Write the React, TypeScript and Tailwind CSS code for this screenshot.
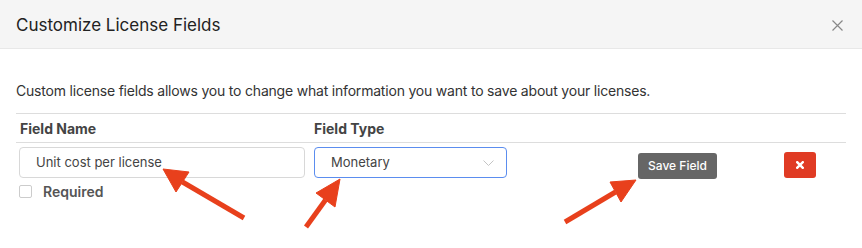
import React from "react";

function Arrow({ tail, tip, left, right }: { tail: [number, number]; tip: [number, number]; left: [number, number]; right: [number, number] }) {
  const mx = (left[0] + right[0]) / 2;
  const my = (left[1] + right[1]) / 2;
  return (
    <g fill="#e8401c" stroke="#e8401c">
      <line x1={tail[0]} y1={tail[1]} x2={mx} y2={my} strokeWidth={5} />
      <polygon points={`${tip[0]},${tip[1]} ${left[0]},${left[1]} ${right[0]},${right[1]}`} strokeWidth={1} strokeLinejoin="round" />
    </g>
  );
}

export default function App() {
  return (
    <div className="relative h-[248px] w-[862px] overflow-hidden bg-white font-['Inter',sans-serif] text-[#333]">
      <header className="flex h-[49px] items-center justify-between border-b border-[#e8e8e8] bg-[#f5f5f5] pt-[3px] pl-4 pr-[19px]">
        <h1 className="text-[17px] font-normal text-[#222]">Customize License Fields</h1>
        <button className="text-[#888]" aria-label="Close">
          <svg width="11" height="11" viewBox="0 0 11 11" stroke="currentColor" strokeWidth="1.2">
            <path d="M0.5 0.5L10.5 10.5M10.5 0.5L0.5 10.5" />
          </svg>
        </button>
      </header>

      <main className="px-4">
        <p className="pt-[32px] pb-[12px] text-[14px] leading-5 tracking-[-0.2px] text-[#333]">
          Custom license fields allows you to change what information you want to save about your licenses.
        </p>

        <div className="grid grid-cols-[294px_324px_146px_1fr] border-t border-[#ddd]">
          <div className="flex h-[29px] items-center border-b border-[#ddd] pl-1 text-[14px] font-bold text-[#444]">Field Name</div>
          <div className="flex h-[29px] items-center border-b border-[#ddd] pl-1 text-[14px] font-bold text-[#444]">Field Type</div>
          <div className="border-b border-[#ddd]" />
          <div className="border-b border-[#ddd]" />

          <div className="pt-1 pl-[3px]">
            <div className="flex h-[31px] w-[286px] items-center rounded-[4px] border border-[#d8d8d8] pl-4 text-[13px] text-[#444]">
              Unit cost per license
            </div>
            <label className="mt-[3px] flex items-center gap-[11px]">
              <span className="h-[13px] w-[13px] rounded-[2px] border border-[#ccc] bg-white" />
              <span className="text-[14px] font-semibold text-[#555]">Required</span>
            </label>
          </div>
          <div className="pt-1 pl-1">
            <div className="flex h-[31px] w-[193px] items-center justify-between rounded-[4px] border border-[#5b8def] pl-4 pr-[12px] text-[13px] text-[#444]">
              Monetary
              <svg width="11" height="6" viewBox="0 0 11 6" fill="none" stroke="#c4c4c4" strokeWidth="1">
                <path d="M0.5 0.5L5.5 5.5L10.5 0.5" />
              </svg>
            </div>
          </div>
          <div className="pt-[9px] pl-1">
            <button className="h-[26px] w-[79px] rounded-[3px] bg-[#666] text-[12px] font-medium text-white">Save Field</button>
          </div>
          <div className="pt-[9px] pl-1">
            <button className="flex h-[26px] w-[32px] items-center justify-center rounded-[3px] bg-[#e03b24]" aria-label="Delete">
              <svg width="8" height="8" viewBox="0 0 8 8" stroke="white" strokeWidth="2.4" strokeLinecap="square">
                <path d="M1.2 1.2L6.8 6.8M6.8 1.2L1.2 6.8" />
              </svg>
            </button>
          </div>
        </div>
      </main>

      <svg className="pointer-events-none absolute inset-0" width="862" height="248">
        <Arrow tail={[244, 218]} tip={[163, 169]} left={[189, 172]} right={[176, 192]} />
        <Arrow tail={[306, 227]} tip={[340, 179]} left={[316, 193]} right={[335, 207]} />
        <Arrow tail={[565, 222]} tip={[636, 180]} left={[610, 182]} right={[621, 202]} />
      </svg>
    </div>
  );
}
